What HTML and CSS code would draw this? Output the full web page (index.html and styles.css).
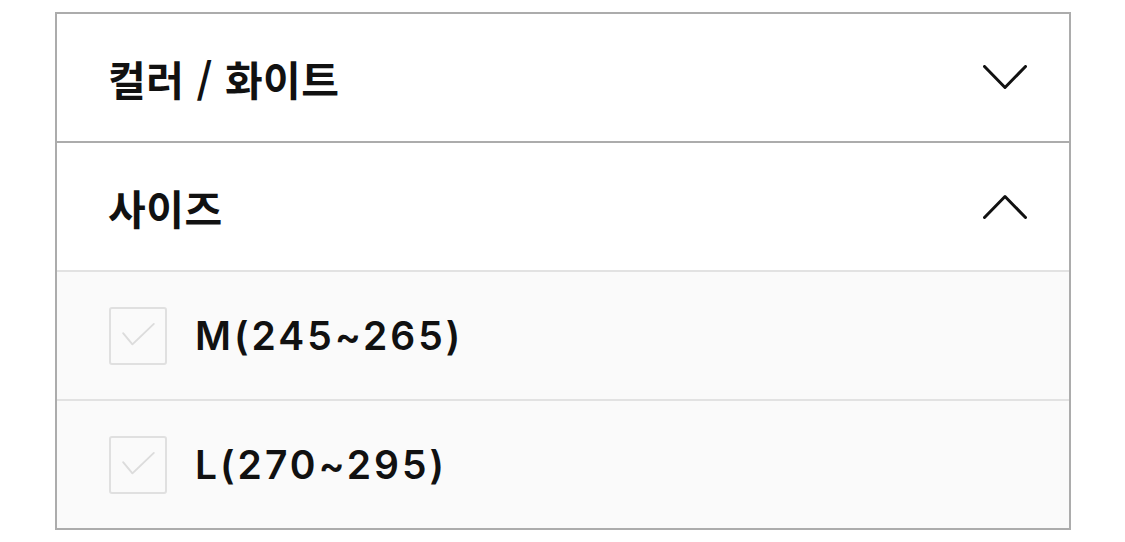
FILE: index.html
```html
<!DOCTYPE html>
<html lang="ko">
<head>
<meta charset="utf-8">
<link rel="stylesheet" href="styles.css">
</head>
<body>
<div class="filter">
  <div class="section">
    <span class="section-title">컬러 / 화이트</span>
    <svg class="chevron" viewBox="0 0 44 25" aria-hidden="true"><polyline points="1.5,1.5 22,22.5 42.5,1.5"/></svg>
  </div>
  <div class="section open">
    <span class="section-title">사이즈</span>
    <svg class="chevron" viewBox="0 0 44 25" aria-hidden="true"><polyline points="1.5,23.5 22,2.5 42.5,23.5"/></svg>
  </div>
  <ul class="options">
    <li class="option">
      <span class="checkbox"><svg viewBox="0 0 58 58" aria-hidden="true"><polyline points="13,26 23,38 46,16"/></svg></span>
      <span class="option-label">M(245~265)</span>
    </li>
    <li class="option">
      <span class="checkbox"><svg viewBox="0 0 58 58" aria-hidden="true"><polyline points="13,26 23,38 46,16"/></svg></span>
      <span class="option-label">L(270~295)</span>
    </li>
  </ul>
</div>
</body>
</html>
```
FILE: styles.css
```css
html, body {
  margin: 0;
  padding: 0;
  background: #ffffff;
}

body {
  padding: 12px 0 0 55px;
  font-family: Inter, "Noto Sans CJK KR", sans-serif;
  color: #111111;
}

.filter {
  width: 1012px;
  border: 2px solid #acacac;
  background: #ffffff;
}

.section {
  height: 127px;
  display: flex;
  align-items: center;
  justify-content: space-between;
  padding: 0 42px 0 51px;
  border-bottom: 2px solid #acacac;
}

.section.open {
  border-bottom-color: #e2e2e2;
}

.section-title {
  font-family: "Noto Sans CJK KR", sans-serif;
  font-weight: 700;
  font-size: 41px;
  letter-spacing: 0.5px;
}

.chevron {
  width: 44px;
  height: 25px;
  fill: none;
  stroke: #111111;
  stroke-width: 3;
  stroke-linecap: round;
  stroke-linejoin: round;
}

.options {
  list-style: none;
  margin: 0;
  padding: 0;
}

.option {
  height: 127px;
  display: flex;
  align-items: center;
  gap: 28px;
  padding-left: 52px;
  background: #fafafa;
  border-bottom: 2px solid #e2e2e2;
}

.option:last-child {
  border-bottom: none;
}

.checkbox {
  width: 58px;
  height: 58px;
  box-sizing: border-box;
  border: 2px solid #e0e0e0;
  border-radius: 3px;
  background: #fafafa;
  display: flex;
}

.checkbox svg {
  width: 54px;
  height: 54px;
  fill: none;
  stroke: #dcdcdc;
  stroke-width: 2;
  stroke-linecap: round;
  stroke-linejoin: round;
}

.option-label {
  font-weight: 600;
  font-size: 39px;
  letter-spacing: 3px;
}
```
